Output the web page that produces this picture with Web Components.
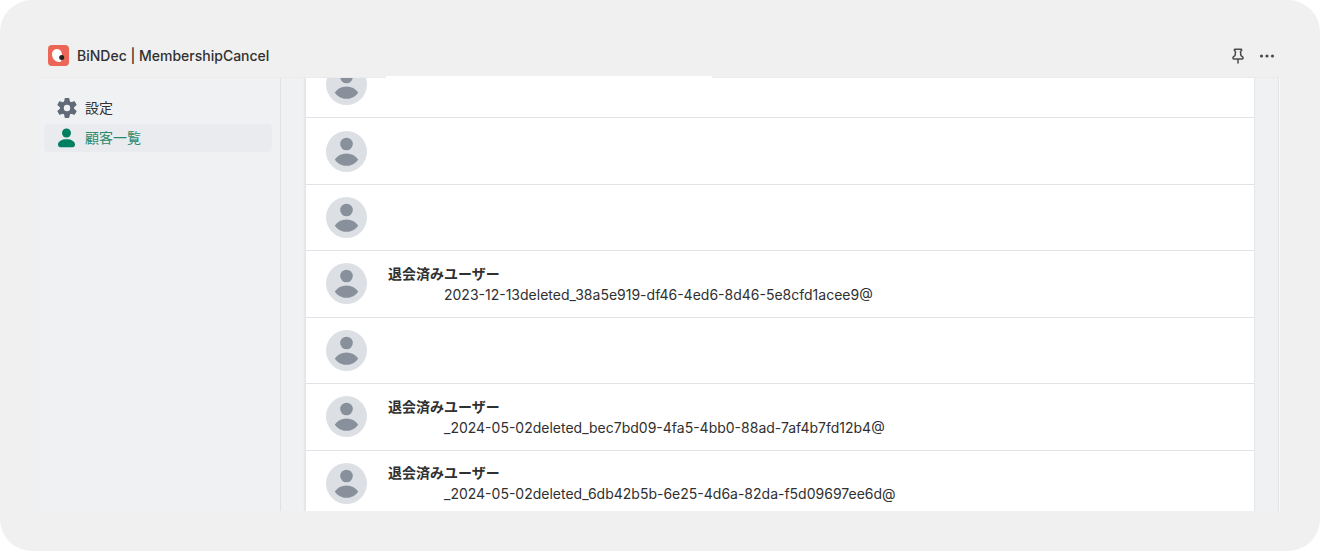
<!DOCTYPE html>
<html lang="ja">
<head>
<meta charset="utf-8">
<title>BiNDec | MembershipCancel</title>
<style>
body {
    margin: 0;
    background-color: #fff;
    color: #303030;
    font-family: Inter, "Noto Sans CJK JP", sans-serif;
    font-size: 14px;
    line-height: 20px;
}
</style>
</head>
<body>
<app-frame>
    <app-header slot="header" name="BiNDec | MembershipCancel"></app-header>
    <side-nav slot="nav">
        <nav-item icon="settings">設定</nav-item>
        <nav-item icon="customers" active>顧客一覧</nav-item>
    </side-nav>
    <customer-list>
        <customer-row></customer-row>
        <customer-row></customer-row>
        <customer-row></customer-row>
        <customer-row name="退会済みユーザー">2023-12-13deleted_38a5e919-df46-4ed6-8d46-5e8cfd1acee9@</customer-row>
        <customer-row></customer-row>
        <customer-row name="退会済みユーザー">_2024-05-02deleted_bec7bd09-4fa5-4bb0-88ad-7af4b7fd12b4@</customer-row>
        <customer-row name="退会済みユーザー">_2024-05-02deleted_6db42b5b-6e25-4d6a-82da-f5d09697ee6d@</customer-row>
    </customer-list>
</app-frame>

<script>
const TOOTH = "M8.3 0h3.4c.3 0 .5.2.6.5l.9 4.500H6.800l.9-4.500c.1-.3.3-.5.600-.5z";
const ICONS = {
    settings: `<circle cx="10" cy="10" r="5.200" fill="none" stroke="var(--icon)" stroke-width="4"/>`
        + [0, 60, 120, 180, 240, 300].map(deg => `<path d="${TOOTH}" transform="rotate(${deg} 10 10)"/>`).join(""),
    customers: `<circle cx="9.500" cy="5" r="4.500"/><path d="M1 16.500c0-3.200 4-5.200 8.500-5.200s8.500 2 8.500 5.200c0 1.800-1 2.800-2.500 2.800h-12C2 19.300 1 18.300 1 16.500z"/>`
};

class AppFrame extends HTMLElement{
    constructor(){
        super();
        this.shadowDOM=this.attachShadow({mode:"open"});
    }

    connectedCallback(){
        this.shadowDOM.innerHTML=`
        <style>
        :host {
            display: flex;
            flex-direction: column;
            box-sizing: border-box;
            height: calc(100vh - 1px);
            padding: 34px 40px 40px;
            border-radius: 32px;
            background-color: #f0f0f0;
        }

        .body {
            display: grid;
            grid-template-columns: 240px minmax(0, 1fr);
            flex: 1;
            min-height: 0;
            border-right: 1px solid #fafafa;
            background-color: #f0f1f3;
        }

        main {
            display: flex;
            min-height: 0;
            overflow: hidden;
            padding: 0 24px;
            border-left: 1px solid #dfe1e5;
            border-right: 1px solid #e1e3e7;
        }

        ::slotted(customer-list) {
            flex: 1;
        }
        </style>

        <slot name="header"></slot>
        <div class="body">
            <slot name="nav"></slot>
            <main><slot></slot></main>
        </div>
        `;
    }
}

class AppHeader extends HTMLElement{
    constructor(){
        super();
        this.shadowDOM=this.attachShadow({mode:"open"});
    }

    connectedCallback(){
        this.shadowDOM.innerHTML=`
        <style>
        :host {
            display: block;
            position: relative;
            border-bottom: 1px solid #ebebeb;
        }

        /* blank strip over the lower edge of the bar */
        :host::after {
            content: "";
            position: absolute;
            left: 346px;
            bottom: -1px;
            width: 326px;
            height: 2px;
            background-color: #fff;
        }

        header {
            display: flex;
            align-items: center;
            height: 43px;
            padding: 0 3px 0 8px;
        }

        h1 {
            flex: 1;
            margin: 0 0 0 8px;
            font-size: 14px;
            font-weight: 500;
        }

        button {
            display: flex;
            padding: 0;
            margin-left: 9px;
            border: none;
            background-color: inherit;
            color: #4a4a4a;
            cursor: pointer;
        }

        svg {
            display: block;
        }
        </style>

        <header>
            <svg width="21" height="21" viewBox="0 0 21 21" aria-hidden="true">
                <rect width="21" height="21" rx="4" fill="#ec6658"/>
                <path d="M9 4c3.200 0 5 2.800 5 6.200 0 3.800-.2 6.800-2.800 6.800C7.500 17 4 13.500 4 9.500 4 6.300 6 4 9 4z" fill="#fff"/>
                <circle cx="13.700" cy="12.500" r="2.500" fill="#222"/>
            </svg>
            <h1></h1>
            <button type="button" aria-label="ピン留め">
                <svg width="20" height="20" viewBox="0 0 20 20" fill="none" stroke="currentColor" stroke-width="1.500" stroke-linejoin="round" stroke-linecap="round">
                    <path d="M7 3.200h6c.8 0 .9 1 .3 1.500l-.8.800.4 4 1.700 1.400c.8.700.5 2.100-.6 2.100H6c-1.100 0-1.400-1.400-.6-2.100l1.700-1.400.4-4-.8-.8c-.6-.5-.5-1.500.3-1.500zM10 13v4"/>
                </svg>
            </button>
            <button type="button" aria-label="その他">
                <svg width="20" height="20" viewBox="0 0 20 20" fill="currentColor">
                    <circle cx="4.500" cy="10" r="1.600"/><circle cx="10" cy="10" r="1.600"/><circle cx="15.500" cy="10" r="1.600"/>
                </svg>
            </button>
        </header>
        `;
        this.shadowDOM.querySelector("h1").textContent=this.getAttribute("name");
    }
}

class SideNav extends HTMLElement{
    constructor(){
        super();
        this.shadowDOM=this.attachShadow({mode:"open"});
    }

    connectedCallback(){
        this.shadowDOM.innerHTML=`
        <style>
        :host {
            display: block;
        }

        nav {
            display: flex;
            flex-direction: column;
            gap: 2px;
            padding: 16px 8px 16px 4px;
        }
        </style>

        <nav><slot></slot></nav>
        `;
    }
}

class NavItem extends HTMLElement{
    constructor(){
        super();
        this.shadowDOM=this.attachShadow({mode:"open"});
    }

    connectedCallback(){
        this.shadowDOM.innerHTML=`
        <style>
        :host {
            display: block;
            --icon: #616a78;
        }

        :host([active]) {
            --icon: #008060;
            color: #2b8a6e;
        }

        a {
            display: flex;
            align-items: center;
            gap: 8px;
            height: 28px;
            padding: 0 13px;
            border-radius: 4px;
            color: inherit;
            text-decoration: none;
        }

        :host([active]) a {
            background-color: #e9ebee;
        }

        svg {
            fill: var(--icon);
        }
        </style>

        <a href="#"><svg width="20" height="20" viewBox="0 0 20 20" aria-hidden="true">${ICONS[this.getAttribute("icon")]}</svg><slot></slot></a>
        `;
    }
}

class CustomerList extends HTMLElement{
    constructor(){
        super();
        this.shadowDOM=this.attachShadow({mode:"open"});
    }

    connectedCallback(){
        // the list runs past the pane at both ends, as when scrolled
        this.shadowDOM.innerHTML=`
        <style>
        :host {
            display: grid;
            grid-auto-rows: 1fr;
            margin: -26px 0 -6px;
            border-left: 1px solid #e3e5e8;
            background-color: #fff;
            box-shadow: 0 0 2px rgba(60,70,90,0.15);
        }
        </style>

        <slot></slot>
        `;
    }
}

class CustomerRow extends HTMLElement{
    constructor(){
        super();
        this.shadowDOM=this.attachShadow({mode:"open"});
    }

    connectedCallback(){
        this.shadowDOM.innerHTML=`
        <style>
        :host {
            display: flex;
            align-items: center;
            gap: 21px;
            padding: 0 20px;
            border-bottom: 1px solid #e1e3e6;
        }

        svg {
            flex: none;
        }

        h2 {
            margin: 0;
            font-size: 14px;
            font-weight: 700;
            line-height: 22px;
        }

        p {
            margin: 0;
            padding-left: 56px;
        }
        </style>

        <svg width="41" height="41" viewBox="0 0 41 41" aria-hidden="true">
            <circle cx="20.500" cy="20.500" r="20.500" fill="#dce0e5"/>
            <circle cx="20.500" cy="13" r="6.300" fill="#88909b"/>
            <path d="M8.800 28.500C11.500 24.700 15.500 22.500 20.500 22.500s9 2.200 11.700 6c-2.700 4-6.700 6.300-11.700 6.300s-9-2.300-11.700-6.300z" fill="#88909b"/>
        </svg>
        <div>
            <h2></h2>
            <p><slot></slot></p>
        </div>
        `;
        this.shadowDOM.querySelector("h2").textContent=this.getAttribute("name") || "";
    }
}

customElements.define("app-frame", AppFrame);
customElements.define("app-header", AppHeader);
customElements.define("side-nav", SideNav);
customElements.define("nav-item", NavItem);
customElements.define("customer-list", CustomerList);
customElements.define("customer-row", CustomerRow);
</script>
</body>
</html>
